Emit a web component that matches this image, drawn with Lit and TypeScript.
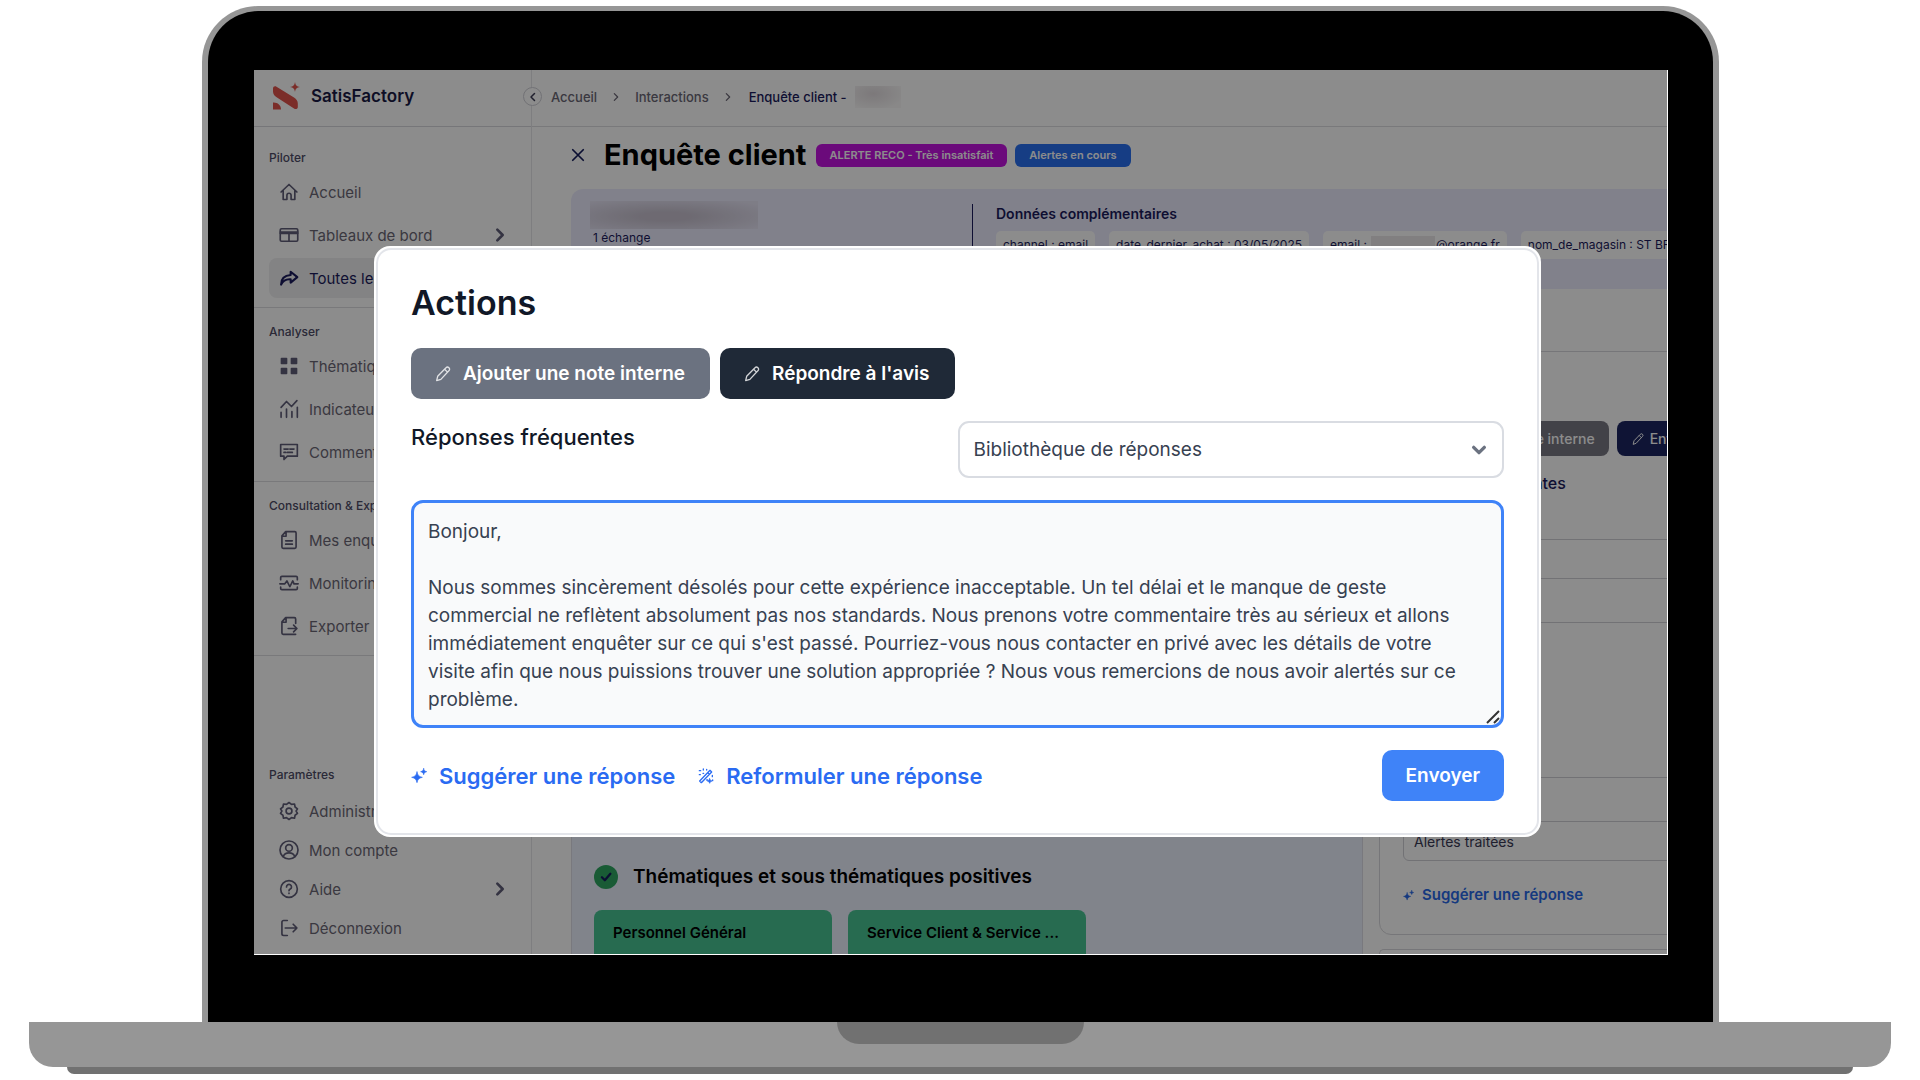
import { LitElement, html, svg, css } from "lit";
import { customElement, property } from "lit/decorators.js";

const ICONS: Record<string, unknown> = {
  home: svg`<path d="M2.500 12 12 3l9.500 9M5 10v11h4.500v-5a2.500 2.500 0 0 1 5 0v5H19V10"/>`,
  table: svg`<rect x="1.500" y="4.500" width="21" height="15" rx="1.500"/><path d="M1.500 10h21M12 10v9.500M1.500 8.500h21"/>`,
  share: svg`<path stroke-width="2.500" d="M14 4.500 22 11l-8 6.500v-4C8 13 4.500 15.500 2.500 20c0-7 4-11 11.500-11.500z"/>`,
  grid: svg`<path fill="currentColor" d="M3 3h6v6H3zM15 3h6v6h-6zM3 15h6v6H3zM15 15h6v6h-6z"/>`,
  chart: svg`<path d="M2.500 22v-6M9 22V12M15.500 22v-7M22 22V10M2.500 10 9 3l6 6 6.500-7"/>`,
  comment: svg`<path d="M2 3h20v14H10l-4 4v-4H2z"/><path d="M6 8.500h5M13 8.500h5M6 12.500h2M10 12.500h6"/>`,
  doc: svg`<path d="M8 2h11a1.500 1.500 0 0 1 1.500 1.500v17A1.500 1.500 0 0 1 19 22H5a1.500 1.500 0 0 1-1.500-1.500V7zM8.500 2v5.500h-5M8 13h8M8 17h8"/>`,
  monitor: svg`<path d="M2 8V5.500A1.500 1.500 0 0 1 3.500 4h17A1.500 1.500 0 0 1 22 5.500V8M2 17v1.500A1.500 1.500 0 0 0 3.500 20h17a1.500 1.500 0 0 0 1.500-1.500V17M1 13h6l2.500-3.500 3.500 7 3.500-7L18 13h5"/>`,
  exportDoc: svg`<path d="M20 9V3.500A1.500 1.500 0 0 0 18.500 2H8L3.500 7v13.500A1.500 1.500 0 0 0 5 22h15M8.500 2v5.500h-5M11 15h10M17.500 11l4 4-4 4"/>`,
  gear: svg`<path d="M12 1.800 15 4l3.600-.4.700 3.600 2.900 2.200L20.500 12l1.700 2.900-2.900 2.200-.7 3.600L15 20l-3 2.200L9 20l-3.600.700-.7-3.600-2.900-2.200L3.500 12 1.800 9.400l2.900-2.200.7-3.600L9 4z"/><circle cx="12" cy="12" r="3.500"/>`,
  user: svg`<circle cx="12" cy="12" r="10.800"/><circle cx="12" cy="9.500" r="4"/><path d="M5 20c1.500-4 4-4.500 7-4.500s5.500.500 7 4.500"/>`,
  help: svg`<circle cx="12" cy="12" r="10"/><path d="M9 9.500a3 3 0 1 1 4.500 2.600c-1 .600-1.500 1-1.500 2.100M12 17v.500"/>`,
  logout: svg`<path d="M10 3H5.500A2 2 0 0 0 3.500 5v14a2 2 0 0 0 2 2H10M7.500 12H21.500M17 7.500l4.500 4.500-4.500 4.500"/>`,
  right: svg`<path d="m8 4 8 8-8 8"/>`,
  left: svg`<path d="m15 5-7 7 7 7"/>`,
  down: svg`<path d="m4 8 8 8 8-8"/>`,
  close: svg`<path d="M3 3l18 18M21 3 3 21"/>`,
  pen: svg`<path d="M2.500 22 4 15.500 16.500 2.700a3 3 0 0 1 4.600 4.100L8.800 20zM14.500 5l4.200 4.200"/>`,
  check: svg`<path d="m5 12.500 5 5 9.500-11"/>`,
  sparkle: svg`<path fill="currentColor" stroke-width="1" d="M9 6c1.200 5.200 2.800 6.800 8 8-5.200 1.200-6.800 2.800-8 8-1.200-5.200-2.800-6.800-8-8 5.200-1.200 6.800-2.800 8-8z"/><path fill="currentColor" stroke-width="1" d="M19 1c.8 3 1.500 3.700 4.500 4.500-3 .8-3.700 1.500-4.500 4.500-.8-3-1.500-3.700-4.500-4.500 3-.8 3.700-1.500 4.500-4.500z"/>`,
  wand: svg`<path d="M2.500 19.500 18 3.500l2.500 2.500L5 22zM14.500 7l2.500 2.500"/><path d="M2 4h2M8 1.500V3M2 10h1.500M7.500 8h1M13 2v1M21.500 11v2M13 18h1.500M22 18v1"/><path fill="currentColor" stroke-width="1" d="m17.500 16 1.100 2.400 2.400 1.100-2.400 1.100-1.100 2.400-1.100-2.400-2.400-1.100 2.400-1.100z"/>`,
};

@customElement("ui-icon")
export class UiIcon extends LitElement {
  @property() name = "";
  @property({ type: Number }) size = 20;
  @property({ type: Number }) weight = 2;

  static styles = css`
    :host { display: inline-flex; flex: none; }
    svg { display: block; fill: none; stroke: currentColor; stroke-linecap: round; stroke-linejoin: round; }
  `;

  render() {
    return html`<svg width=${this.size} height=${this.size} viewBox="0 0 24 24" stroke-width=${this.weight} aria-hidden="true">${ICONS[this.name]}</svg>`;
  }
}

interface NavItem { icon: string; label: string; active?: boolean; more?: boolean }
interface NavSection { title: string; items: NavItem[] }

const SECTIONS: NavSection[] = [
  { title: "Piloter", items: [
    { icon: "home", label: "Accueil" },
    { icon: "table", label: "Tableaux de bord", more: true },
    { icon: "share", label: "Toutes les", active: true },
  ] },
  { title: "Analyser", items: [
    { icon: "grid", label: "Thématiques" },
    { icon: "chart", label: "Indicateurs" },
    { icon: "comment", label: "Commentaires" },
  ] },
  { title: "Consultation & Export", items: [
    { icon: "doc", label: "Mes enquêtes" },
    { icon: "monitor", label: "Monitoring" },
    { icon: "exportDoc", label: "Exporter" },
  ] },
];

const SETTINGS: NavSection = { title: "Paramètres", items: [
  { icon: "gear", label: "Administration" },
  { icon: "user", label: "Mon compte" },
  { icon: "help", label: "Aide", more: true },
  { icon: "logout", label: "Déconnexion" },
] };

@customElement("side-nav")
export class SideNav extends LitElement {
  static styles = css`
    :host { display: flex; flex-direction: column; box-sizing: border-box; border-right: 1px solid #e6e6ea; color: #6b6775; }
    * { box-sizing: border-box; }
    .brand { display: flex; align-items: center; gap: 10px; height: 57px; padding: 0 18px 4px 19px; border-bottom: 1px solid #d8d8dc; color: #1b1b45; font-size: 17px; font-weight: 600; }
    .mark { display: block; flex: none; }
    .menu { display: flex; flex-direction: column; flex: 1; }
    .section { padding: 15px 15px 9px; border-bottom: 1px solid #dcdce0; }
    .section.first { padding-top: 22px; }
    .section.last { margin-top: auto; padding-bottom: 8px; border: 0; }
    h2 { margin: 0 0 5px; font-size: 12px; line-height: 18px; font-weight: 500; color: #4e4c66; }
    .last h2 { margin-bottom: 9px; }
    ul { display: flex; flex-direction: column; gap: 3px; margin: 0; padding: 0; list-style: none; }
    a { display: flex; align-items: center; gap: 10px; height: 40px; padding: 0 8px 0 10px; border-radius: 8px; color: inherit; font-size: 15px; text-decoration: none; white-space: nowrap; }
    .last a { height: 36px; }
    a.active { background: #efeff0; color: #1b1b5c; }
    a ui-icon { color: #605e78; }
    a.active ui-icon { color: #1b1b5c; }
    .label { flex: 1; }
  `;

  private section(s: NavSection, cls: string) {
    return html`<section class="section ${cls}">
      <h2>${s.title}</h2>
      <ul>
        ${s.items.map((i) => html`<li><a href="#" class=${i.active ? "active" : ""}>
          <ui-icon name=${i.icon} size="20"></ui-icon><span class="label">${i.label}</span>
          ${i.more ? html`<ui-icon name="right" size="16" weight="4"></ui-icon>` : ""}
        </a></li>`)}
      </ul>
    </section>`;
  }

  render() {
    return html`
      <div class="brand">
        <svg class="mark" width="28" height="28" viewBox="0 0 28 28" fill="#e0524c" aria-hidden="true">
          <path d="M0 6.500C0 4.500 2 3.800 3.500 4.800L21 15.500c2.500 1.500 3.800 3.500 3.800 6v3.500c0 2-2 2.700-3.800 1.600L4 15.500C1.500 14 0 12 0 9.500zM0 20.500c4.500-.3 8 2.500 8 7H0z"/>
          <path d="M22 0c.7 3.500 1.500 4.300 5 5-3.500.7-4.300 1.500-5 5-.7-3.500-1.500-4.300-5-5 3.500-.7 4.300-1.500 5-5z"/>
        </svg>
        <span>SatisFactory</span>
      </div>
      <nav class="menu">
        ${SECTIONS.map((s, n) => this.section(s, n === 0 ? "first" : ""))}
        ${this.section(SETTINGS, "last")}
      </nav>`;
  }
}

@customElement("survey-page")
export class SurveyPage extends LitElement {
  static styles = css`
    :host { display: flex; flex-direction: column; min-width: 0; overflow: hidden; color: #1b1b5c; }
    * { box-sizing: border-box; }
    button, select, textarea { font: inherit; }
    header { display: flex; align-items: center; height: 57px; flex: none; padding: 0 0 2px 19px; border-bottom: 1px solid #dcdce0; }
    .crumbs { display: flex; align-items: center; gap: 14px; font-size: 13px; font-weight: 500; white-space: nowrap; }
    .crumbs a { color: #6b6775; text-decoration: none; }
    .crumbs ui-icon { color: #6b6775; }
    .current { display: flex; align-items: center; gap: 8px; padding-left: 2px; }
    .mask { width: 46px; height: 22px; background: radial-gradient(ellipse at 40% 35%, #e2dcdf, #f9f8f8 80%); }
    .titlebar { display: flex; align-items: center; flex: none; height: 62px; padding: 0 0 6px 39px; }
    .close { display: flex; padding: 0; border: 0; background: none; color: #141d5c; }
    h1 { margin: 0 9px 0 19px; color: #000; font-size: 29px; line-height: 36px; font-weight: 700; }
    .tag { margin-right: 8px; padding: 0 14px; border-radius: 6px; background: #c313e0; color: #fff; font-size: 11px; line-height: 23px; font-weight: 600; white-space: nowrap; }
    .tag.blue { background: #286ff0; }
    .summary { display: flex; flex: none; height: 100px; margin-left: 39px; padding-top: 12px; background: #ececfe; border-radius: 12px 0 0 0; }
    .person { width: 401px; flex: none; padding-left: 19px; font-size: 12px; }
    .name { width: 168px; height: 28px; background: radial-gradient(ellipse at 45% 55%, #c8c2d0 20%, #e6e4f5 90%); }
    .count { padding-left: 3px; line-height: 18px; }
    .extra { flex: 1; min-width: 0; margin-top: 3px; padding-left: 23px; border-left: 1px solid #1b1b5c; }
    h3 { margin: 0; font-size: 14px; line-height: 20px; font-weight: 600; }
    .chips { display: flex; gap: 14px; margin: 7px 0 0; padding: 0; list-style: none; }
    .chip { flex: none; display: flex; align-items: center; padding: 0 7px; border-radius: 5px; background: #fff; font-size: 12px; line-height: 28px; font-weight: 400; white-space: nowrap; }
    .hidden-mail { width: 64px; height: 18px; margin: 0 1px 0 4px; background: #ece8ea; }
    .columns { display: grid; grid-template-columns: 792px 320px; gap: 16px; flex: 1; min-height: 0; margin-left: 39px; }
    .insights { display: flex; flex-direction: column; justify-content: flex-end; margin-top: 16px; padding: 0 22px; background: #ecf0fe; border: solid #dcdce6; border-width: 0 1px; color: #000; }
    .topic { display: flex; align-items: center; gap: 15px; margin-bottom: 21px; }
    .topic h2 { margin: 0; font-size: 19px; line-height: 24px; font-weight: 600; }
    .dot { display: flex; align-items: center; justify-content: center; width: 24px; height: 24px; border-radius: 50%; background: #2fa762; color: #141d5c; }
    .cards { display: grid; grid-template-columns: 238px 238px; gap: 16px; }
    .card { height: 44px; padding: 0 19px; border-radius: 8px 8px 0 0; background: #47c393; font-size: 15px; line-height: 46px; font-weight: 600; white-space: nowrap; overflow: hidden; text-overflow: ellipsis; }
    .side { display: flex; flex-direction: column; gap: 14px; padding-top: 62px; }
    .box { padding: 69px 0 0 23px; height: 584px; flex: none; border: 1px solid #d8d8dc; border-radius: 12px 0 0 12px; }
    .next { flex: 1; border: 1px solid #d8d8dc; border-width: 1px 0 0 1px; border-radius: 12px 0 0 0; }
    .actions { display: flex; gap: 8px; }
    .btn { display: flex; align-items: center; gap: 6px; height: 35px; flex: none; padding: 0 14px 0 12px; border: 0; border-radius: 8px; background: #797883; color: #fff; font-size: 14px; font-weight: 500; white-space: nowrap; }
    .btn.navy { padding-left: 15px; background: #1d2662; }
    .lab { display: block; height: 83px; padding-top: 17px; font-size: 16px; line-height: 20px; font-weight: 500; }
    .field { display: block; width: 100%; height: 40px; padding: 0 10px; border: 1px solid #d0d0d6; border-radius: 6px; background: #fff; color: #3a3a55; font-size: 14px; appearance: none; }
    .tools { height: 44px; border: solid #d0d0d6; border-width: 0 1px 1px; }
    .editor { display: block; width: 100%; height: 155px; border: solid #d0d0d6; border-width: 0 1px 1px; resize: none; background: #fff; }
    .status { margin-top: 43px; }
    .suggest { display: flex; align-items: center; gap: 8px; margin-top: 24px; padding: 0; border: 0; background: none; color: #2869e7; font-size: 15px; line-height: 20px; font-weight: 600; }
  `;

  render() {
    return html`
      <header>
        <nav class="crumbs" aria-label="Fil d'Ariane">
          <a href="#">Accueil</a><ui-icon name="right" size="10" weight="3"></ui-icon>
          <a href="#">Interactions</a><ui-icon name="right" size="10" weight="3"></ui-icon>
          <span class="current">Enquête client - <span class="mask"></span></span>
        </nav>
      </header>
      <div class="titlebar">
        <button class="close" aria-label="Fermer"><ui-icon name="close" size="14" weight="3"></ui-icon></button>
        <h1>Enquête client</h1>
        <span class="tag">ALERTE RECO - Très insatisfait</span>
        <span class="tag blue">Alertes en cours</span>
      </div>
      <section class="summary">
        <div class="person"><div class="name"></div><div class="count">1 échange</div></div>
        <div class="extra">
          <h3>Données complémentaires</h3>
          <ul class="chips">
            <li class="chip">channel : email</li>
            <li class="chip">date_dernier_achat : 03/05/2025</li>
            <li class="chip">email : <span class="hidden-mail"></span>@orange.fr</li>
            <li class="chip">nom_de_magasin : ST BR</li>
          </ul>
        </div>
      </section>
      <div class="columns">
        <section class="insights">
          <div class="topic"><span class="dot"><ui-icon name="check" size="14" weight="4"></ui-icon></span><h2>Thématiques et sous thématiques positives</h2></div>
          <div class="cards">
            <div class="card">Personnel Général</div>
            <div class="card">Service Client &amp; Service ...</div>
          </div>
        </section>
        <aside class="side">
          <div class="box">
            <div class="actions">
              <button class="btn"><ui-icon name="pen" size="12"></ui-icon>Ajouter une note interne</button>
              <button class="btn navy"><ui-icon name="pen" size="12"></ui-icon>Envoyer</button>
            </div>
            <label class="lab" for="frequent">Réponses fréquentes</label>
            <select class="field" id="frequent"></select>
            <div class="tools"></div>
            <textarea class="editor" aria-label="Réponse"></textarea>
            <select class="field status" aria-label="Statut"><option>Alertes traitées</option></select>
            <button class="suggest"><ui-icon name="sparkle" size="11"></ui-icon>Suggérer une réponse</button>
          </div>
          <div class="next"></div>
        </aside>
      </div>`;
  }
}

const REPLY = `Bonjour,

Nous sommes sincèrement désolés pour cette expérience inacceptable. Un tel délai et le manque de geste
commercial ne reflètent absolument pas nos standards. Nous prenons votre commentaire très au sérieux et allons
immédiatement enquêter sur ce qui s'est passé. Pourriez-vous nous contacter en privé avec les détails de votre
visite afin que nous puissions trouver une solution appropriée ? Nous vous remercions de nous avoir alertés sur ce
problème.`;

@customElement("reply-dialog")
export class ReplyDialog extends LitElement {
  static styles = css`
    :host { display: block; padding: 2px; border-radius: 16px; background: #fff; color: #111827; }
    * { box-sizing: border-box; }
    button, select, textarea { font: inherit; }
    .frame { display: flex; flex-direction: column; gap: 22px; padding: 33px 33px 32px; border: 2px solid #e3e5ea; border-radius: 15px; }
    h2 { margin: 0 0 3px; font-size: 34px; line-height: 40px; font-weight: 600; }
    .row { display: flex; align-items: center; gap: 10px; }
    .btn { display: flex; align-items: center; gap: 12px; height: 51px; padding: 0 25px 0 24px; border: 0; border-radius: 10px; background: #6b7280; color: #fff; font-size: 19px; font-weight: 600; white-space: nowrap; }
    .btn ui-icon { opacity: 0.8; }
    .btn.dark { background: #1f2937; }
    .btn.send { margin-left: auto; padding: 0 24px; background: #3f83f8; }
    .library { display: grid; grid-template-columns: 1fr 1fr; align-items: start; }
    .library label { padding-top: 2px; font-size: 22px; line-height: 28px; font-weight: 500; }
    .select { position: relative; display: block; }
    select { display: block; width: 100%; height: 57px; padding: 0 14px; border: 2px solid #d9dce2; border-radius: 11px; background: #fff; color: #374151; font-size: 19px; appearance: none; }
    .select ui-icon { position: absolute; right: 17px; top: 21px; color: #6b7280; pointer-events: none; }
    .editor { position: relative; display: block; }
    textarea { display: block; width: 100%; height: 228px; padding: 15px 0 15px 14px; border: 3px solid #3f83f8; border-radius: 12px; outline: 0; resize: none; overflow: hidden; background: #f9fafb; color: #374151; font-size: 19px; line-height: 28px; white-space: pre; }
    .grip { position: absolute; right: 4px; bottom: 4px; stroke: #333; stroke-width: 2; }
    .links { gap: 23px; }
    .link { display: flex; align-items: center; gap: 12px; padding: 0; border: 0; background: none; color: #2a6bf2; font-size: 22px; line-height: 28px; font-weight: 600; white-space: nowrap; }
  `;

  render() {
    return html`<div class="frame" role="dialog" aria-labelledby="title">
      <h2 id="title">Actions</h2>
      <div class="row">
        <button class="btn"><ui-icon name="pen" size="16"></ui-icon>Ajouter une note interne</button>
        <button class="btn dark"><ui-icon name="pen" size="16"></ui-icon>Répondre à l'avis</button>
      </div>
      <div class="library">
        <label for="library">Réponses fréquentes</label>
        <span class="select">
          <select id="library"><option>Bibliothèque de réponses</option></select>
          <ui-icon name="down" size="16" weight="5"></ui-icon>
        </span>
      </div>
      <div class="editor">
        <textarea aria-label="Votre réponse" .value=${REPLY}></textarea>
        <svg class="grip" width="14" height="14" viewBox="0 0 14 14" aria-hidden="true"><path d="M1 13 13 1M8 13l5-5"/></svg>
      </div>
      <div class="row links">
        <button class="link"><ui-icon name="sparkle" size="16"></ui-icon>Suggérer une réponse</button>
        <button class="link"><ui-icon name="wand" size="16"></ui-icon>Reformuler une réponse</button>
        <button class="btn send">Envoyer</button>
      </div>
    </div>`;
  }
}

@customElement("app-root")
export class AppRoot extends LitElement {
  static styles = css`
    :host { display: flex; flex-direction: column; min-height: 100vh; box-sizing: border-box; padding: 6px 0; background: #fff; font-family: Inter, "Liberation Sans", sans-serif; }
    * { box-sizing: border-box; }
    .lid { display: flex; flex: 1; margin: 0 201px 0 202px; padding: 59px 45px 67px 46px; border: solid #969696; border-width: 5px 6px 0; border-radius: 56px 56px 0 0; background: #000; }
    .screen { position: relative; display: grid; grid-template-columns: 278px minmax(0, 1fr); flex: 1; min-width: 0; background: #fff; border: solid #fff; border-width: 0 1px 1px 0; }
    .shade { position: absolute; inset: 0; background: rgba(0, 0, 0, 0.45); }
    .collapse { position: absolute; left: 269px; top: 17px; display: flex; align-items: center; justify-content: center; width: 19px; height: 19px; padding: 0; border: 1px solid #cfcfd6; border-radius: 50%; background: #fff; color: #3d3c55; }
    reply-dialog { position: absolute; left: 120px; right: 126px; top: 176px; }
    .base { display: flex; justify-content: center; height: 45px; margin: 0 29px; border-radius: 0 0 24px 24px; background: #969696; }
    .notch { width: 247px; height: 22px; border-radius: 0 0 22px 22px; background: #717171; }
    .foot { height: 7px; margin: 0 67px; border-radius: 0 0 7px 7px; background: #717171; }
  `;

  render() {
    return html`
      <div class="lid">
        <main class="screen">
          <side-nav></side-nav>
          <survey-page></survey-page>
          <button class="collapse" aria-label="Réduire le menu"><ui-icon name="left" size="12" weight="3"></ui-icon></button>
          <div class="shade"></div>
          <reply-dialog></reply-dialog>
        </main>
      </div>
      <div class="base"><div class="notch"></div></div>
      <div class="foot"></div>`;
  }
}
